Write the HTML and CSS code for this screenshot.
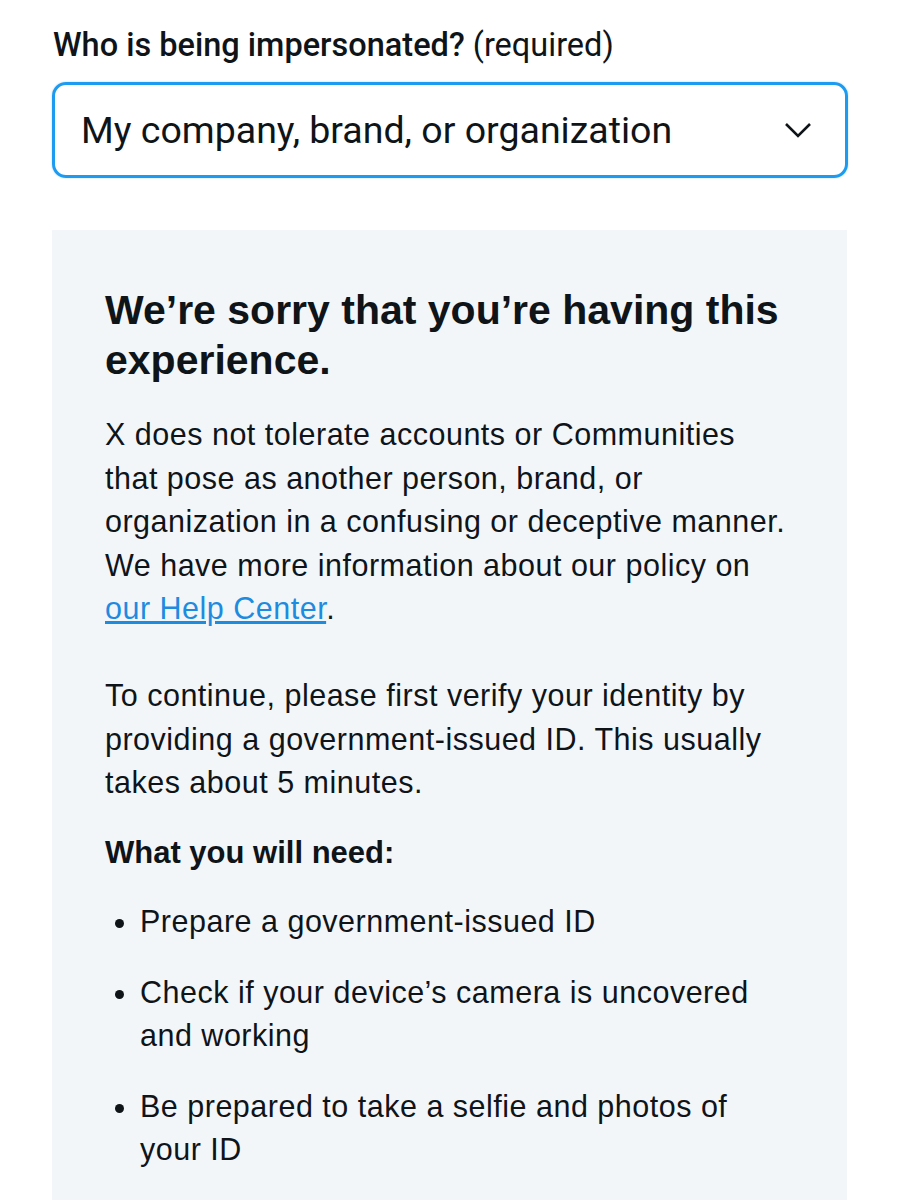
FILE: index.html
```html
<!DOCTYPE html>
<html>
<head>
<meta charset="utf-8">
<link rel="stylesheet" href="styles.css">
</head>
<body>
<div class="page">
  <div class="field">
    <div class="label"><span class="label-strong">Who is being impersonated?</span> (required)</div>
    <div class="select">
      <span class="select-value">My company, brand, or organization</span>
      <svg class="chevron" width="28" height="16" viewBox="0 0 28 16"><path d="M2 2 L14 14 L26 2" fill="none" stroke="#0f1419" stroke-width="2.6"/></svg>
    </div>
  </div>
  <div class="panel">
    <div class="content">
      <h1 class="title">We’re sorry that you’re having this experience.</h1>
      <p class="text">X does not tolerate accounts or Communities that pose as another person, brand, or organization in a confusing or deceptive manner. We have more information about our policy on <a class="link" href="#">our Help Center</a>.</p>
      <p class="text spaced">To continue, please first verify your identity by providing a government-issued ID. This usually takes about 5 minutes.</p>
      <p class="subhead">What you will need:</p>
      <ul class="needs">
        <li>Prepare a government-issued ID</li>
        <li>Check if your device’s camera is uncovered and working</li>
        <li>Be prepared to take a selfie and photos of your ID</li>
      </ul>
    </div>
  </div>
</div>
</body>
</html>
```
FILE: styles.css
```css
html, body {
  margin: 0;
  padding: 0;
  background: #ffffff;
}
.page {
  width: 796px;
  margin-left: 52px;
  padding-top: 25px;
  color: #0f1419;
}
.field {
  display: flex;
  flex-direction: column;
}
.label {
  font-family: Roboto, "Liberation Sans", sans-serif;
  font-size: 32.5px;
  line-height: 40px;
  padding-left: 1px;
  color: #0f1419;
}
.label-strong {
  font-weight: 500;
}
.select {
  margin-top: 17px;
  height: 90px;
  border: 3px solid #1d9bf0;
  border-radius: 14px;
  display: flex;
  align-items: center;
  justify-content: space-between;
  padding: 0 33px 0 26px;
  box-shadow: 0 0 2px rgba(29,155,240,0.4);
}
.select-value {
  font-family: Roboto, "Liberation Sans", sans-serif;
  font-size: 37.5px;
  color: #0f1419;
}
.chevron {
  display: block;
}
.panel {
  margin-top: 52px;
  width: 795px;
  background: #f3f6f9;
  padding: 55px 53px 30px 53px;
  box-sizing: border-box;
  font-family: "Liberation Sans", Arial, sans-serif;
  min-height: 980px;
}
.content {
  max-width: 684px;
}
.title {
  margin: 0;
  font-size: 41px;
  line-height: 50px;
  font-weight: 700;
  color: #0f1419;
}
.text {
  margin: 28px 0 0 0;
  font-size: 30.5px;
  line-height: 43.5px;
  letter-spacing: 0.5px;
  color: #0f1419;
}
.text.spaced {
  margin-top: 43.5px;
}
.link {
  color: #1d8ce0;
  text-decoration: underline;
}
.subhead {
  margin: 26.5px 0 0 0;
  font-size: 31px;
  line-height: 43.5px;
  font-weight: 700;
}
.needs {
  margin: 25.5px 0 0 0;
  padding: 0 10px 0 35px;
  font-size: 30.5px;
  line-height: 43.5px;
  letter-spacing: 0.5px;
}
.needs li {
  margin-bottom: 27px;
}
```
